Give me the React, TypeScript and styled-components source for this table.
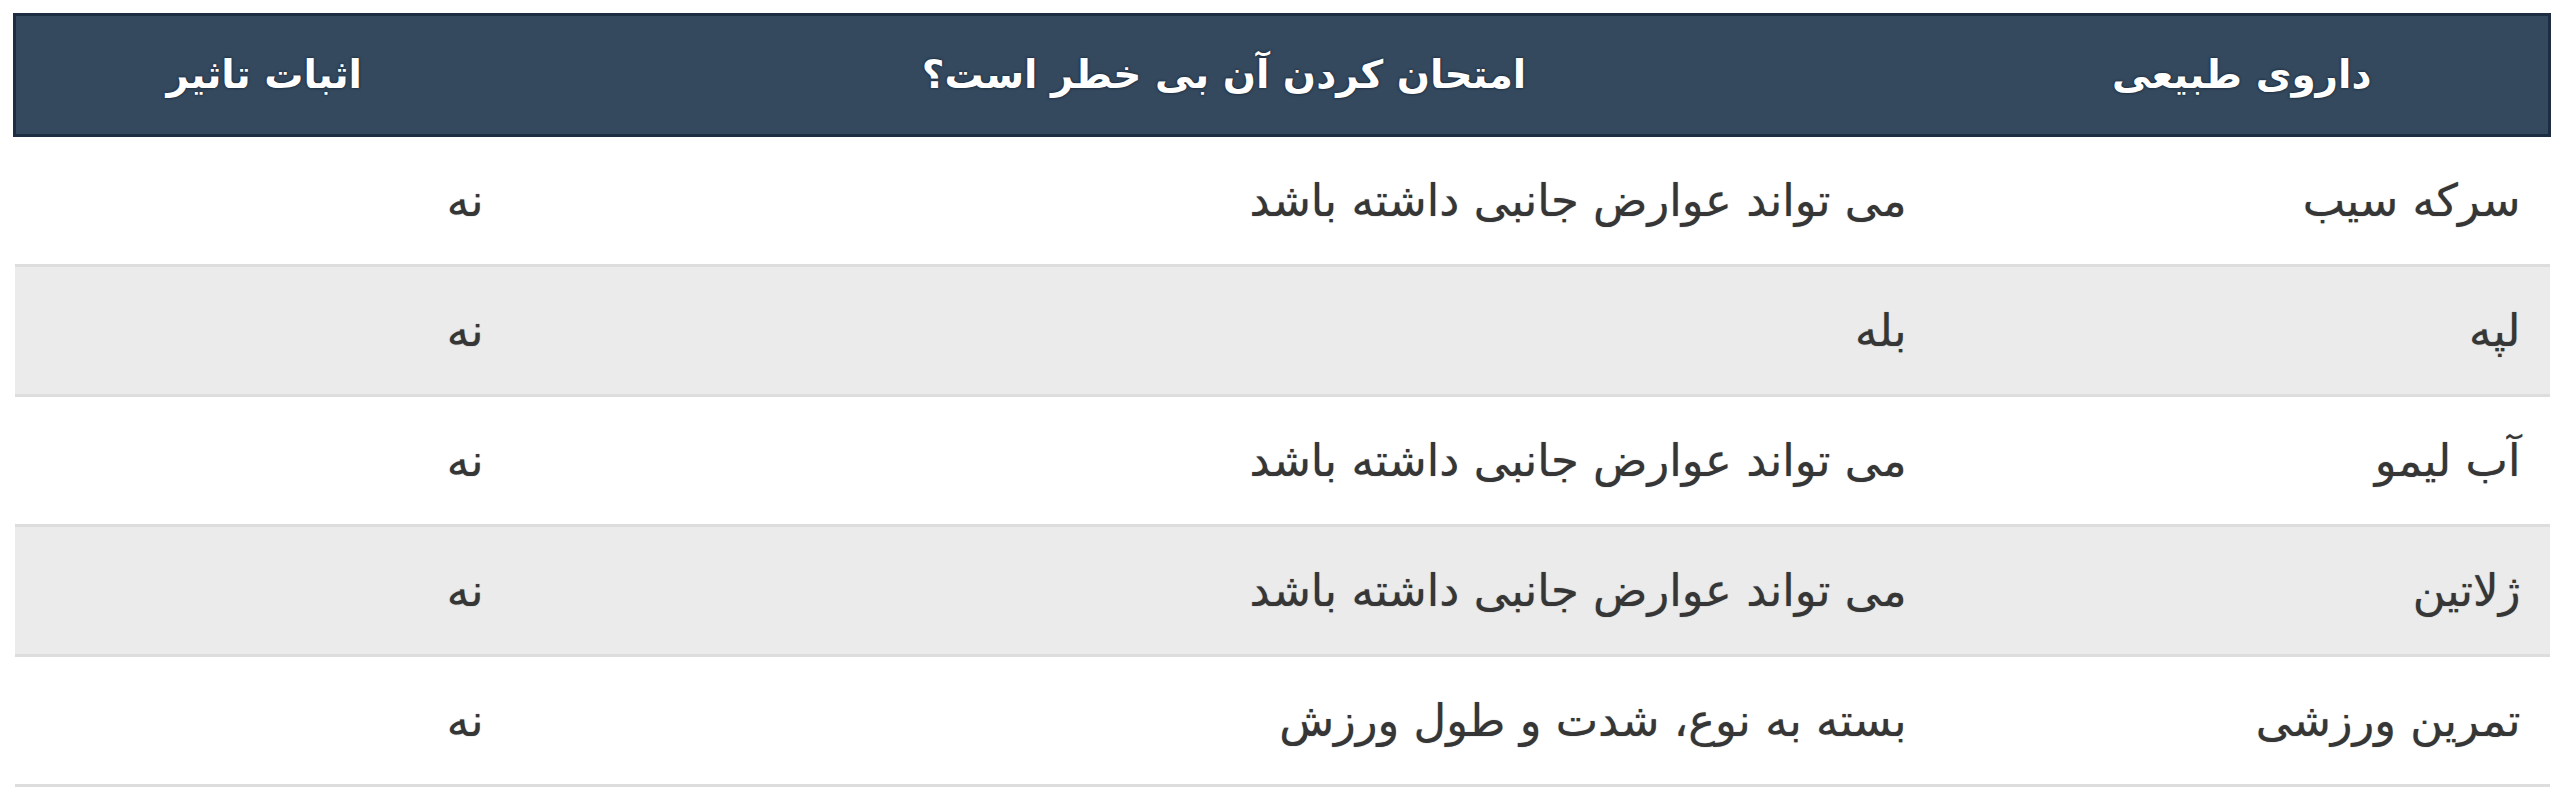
import React from "react";
import styled, { createGlobalStyle } from "styled-components";

const Global = createGlobalStyle`
  html, body { margin: 0; padding: 0; background: #ffffff; }
  body { font-family: "DejaVu Sans", "Noto Sans", sans-serif; }
`;

const Page = styled.div`
  padding: 13px 16px 0 13px;
`;

const Table = styled.table`
  width: 2535px;
  border-collapse: collapse;
  table-layout: fixed;
  direction: rtl;
  font-family: "DejaVu Sans", "Noto Sans", sans-serif;
`;

const HeadRow = styled.tr`
  background: #34495e;
  border: 3px solid #1d2d42;
`;

const HeadCell = styled.th`
  height: 118px;
  padding: 0 29px;
  color: #ffffff;
  font-size: 39px;
  font-weight: bold;
  line-height: 1.2;
  text-align: center;
  vertical-align: middle;
  text-shadow: 0 0 3px rgba(10, 20, 35, 0.9);
`;

const BodyRow = styled.tr<{ $alt: boolean }>`
  background: ${(p) => (p.$alt ? "#ebebeb" : "#ffffff")};
  border-bottom: 3px solid #dddddd;
`;

const Cell = styled.td`
  height: 127px;
  padding: 0 29px;
  color: #363636;
  font-size: 45px;
  line-height: 1.2;
  text-align: right;
  vertical-align: middle;
  text-shadow: 0 0 1px rgba(40, 40, 40, 0.6);
`;

const rows = [
  ["سرکه سیب", "می تواند عوارض جانبی داشته باشد", "نه"],
  ["لپه", "بله", "نه"],
  ["آب لیمو", "می تواند عوارض جانبی داشته باشد", "نه"],
  ["ژلاتین", "می تواند عوارض جانبی داشته باشد", "نه"],
  ["تمرین ورزشی", "بسته به نوع، شدت و طول ورزش", "نه"],
];

export default function App() {
  return (
    <Page>
      <Global />
      <Table>
        <colgroup>
          <col style={{ width: "614px" }} />
          <col style={{ width: "1423px" }} />
          <col style={{ width: "498px" }} />
        </colgroup>
        <thead>
          <HeadRow>
            <HeadCell>داروی طبیعی</HeadCell>
            <HeadCell>امتحان کردن آن بی خطر است؟</HeadCell>
            <HeadCell>اثبات تاثیر</HeadCell>
          </HeadRow>
        </thead>
        <tbody>
          {rows.map((r, i) => (
            <BodyRow key={i} $alt={i % 2 === 1}>
              {r.map((c, j) => (
                <Cell key={j}>{c}</Cell>
              ))}
            </BodyRow>
          ))}
        </tbody>
      </Table>
    </Page>
  );
}
